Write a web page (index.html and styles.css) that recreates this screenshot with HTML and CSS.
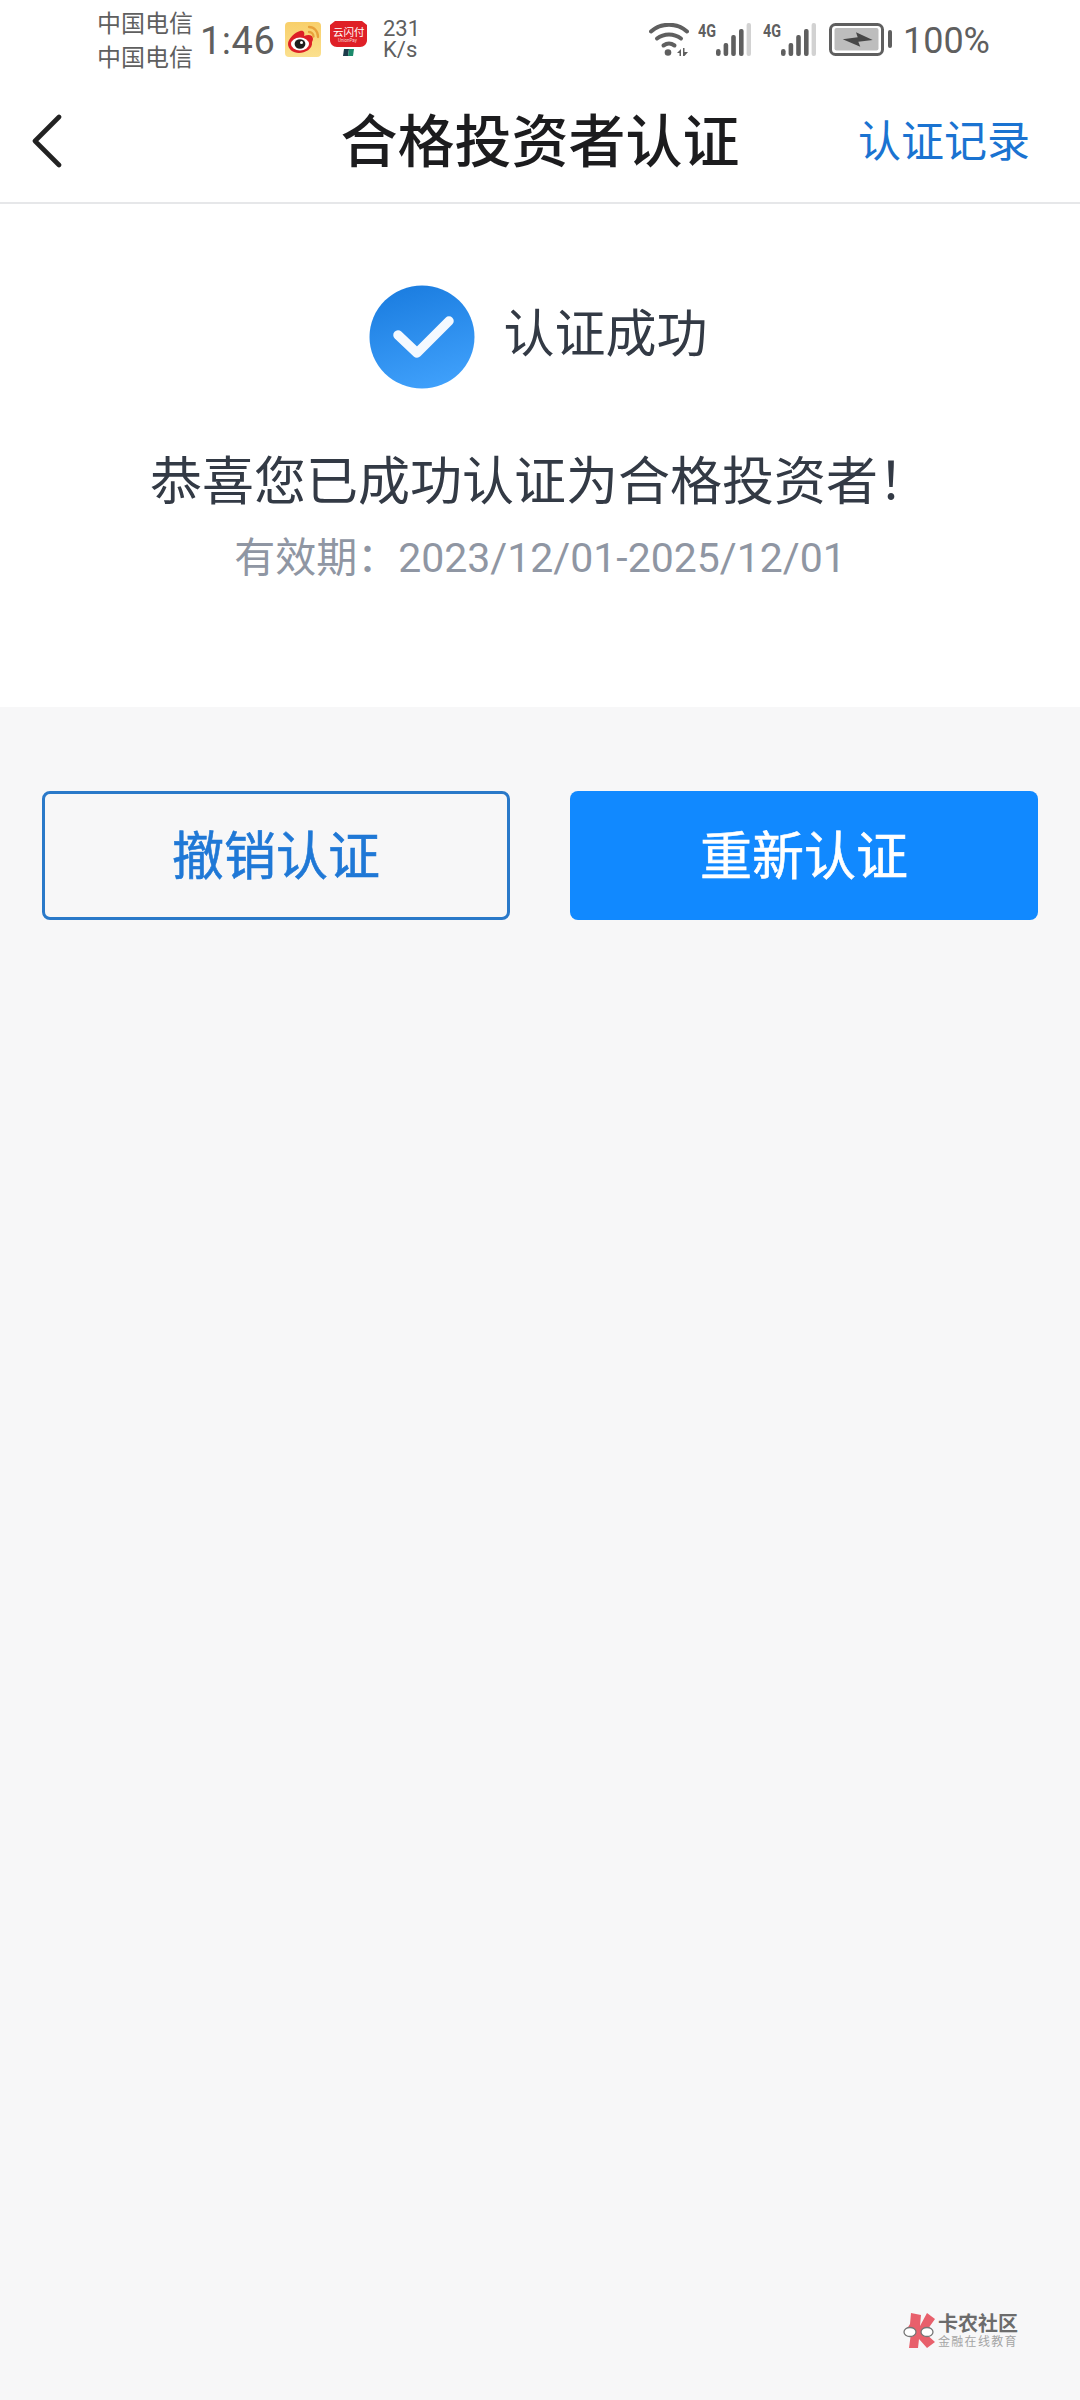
FILE: index.html
```html
<!DOCTYPE html>
<html lang="zh-CN">
<head>
    <meta charset="UTF-8">
    <meta name="viewport" content="width=device-width, initial-scale=1.0">
    <title>合格投资者认证</title>
    <link rel="stylesheet" href="styles.css">
</head>
<body>
<div class="status-bar">
    <div class="status-left">
        <div class="carriers">
            <div>中国电信</div>
            <div>中国电信</div>
        </div>
        <div class="time">1:46</div>
        <svg class="app-icon weibo" width="36" height="35" viewBox="0 0 36 35">
            <defs>
                <linearGradient id="wbGrad" x1="0" y1="0" x2="0" y2="1">
                    <stop offset="0" stop-color="#f8cf6a"/>
                    <stop offset="1" stop-color="#fbe08e"/>
                </linearGradient>
            </defs>
            <rect width="36" height="35" rx="4" fill="url(#wbGrad)"/>
            <path d="M3 22c0-5 7-12 12-13 4-1 5 2 4 5 5-2 9-1 9 3 0 1-.5 2-1 3 1 7-7 11-13 11C8 31 3 27 3 22z" fill="#dd1f26"/>
            <ellipse cx="15" cy="22" rx="9" ry="6.5" fill="#fff"/>
            <ellipse cx="15" cy="22" rx="5.4" ry="4.8" fill="#1e1e1e"/>
            <circle cx="16.5" cy="20.5" r="1.5" fill="#fff"/>
            <path d="M24 5c5 0 9 4 9 10M24 10c2.500 0 4.500 2 4.500 4.500" fill="none" stroke="#e8a13a" stroke-width="2.300" stroke-linecap="round"/>
        </svg>
        <svg class="app-icon" width="37" height="36" viewBox="0 0 37 36">
            <path d="M5 0h27l5 4v15c0 4-3 7-7 7H7c-4 0-7-3-7-7V4z" fill="#df2027"/>
            <text x="3" y="14.500" class="up-name">云闪付</text>
            <text x="8" y="21" class="up-sub">UnionPay</text>
            <path d="M14 28h5l-1 7h-5z" fill="#1c3a4a"/>
            <path d="M19 28h5l-1 7h-5z" fill="#1b8a6b"/>
        </svg>
        <div class="speed">
            <div>231</div>
            <div>K/s</div>
        </div>
    </div>
    <div class="status-right">
        <svg class="wifi" width="40" height="33" viewBox="0 0 40 33">
            <path d="M2 8.500c10-9 26-9 36 0" fill="none" stroke="#5f5f5f" stroke-width="4" stroke-linecap="round"/>
            <path d="M8 15.500c7-5.500 17-5.500 24 0" fill="none" stroke="#5f5f5f" stroke-width="4" stroke-linecap="round"/>
            <path d="M14.500 22.500c3.500-2.500 7.500-2.500 11 0" fill="none" stroke="#5f5f5f" stroke-width="4" stroke-linecap="round"/>
            <circle cx="19" cy="29.500" r="3.300" fill="#5f5f5f"/>
            <path d="M28 30l4-4v7h-1.500v-3zM34 25h1.500v4h3.500l-3.500 4H34z" fill="#5f5f5f"/>
        </svg>
        <svg class="signal" width="54" height="39" viewBox="0 -6 54 39">
            <text x="0" y="14" class="net-label" textLength="18" lengthAdjust="spacingAndGlyphs">4G</text>
            <rect x="18" y="26" width="4.600" height="7" rx="2.300" fill="#5f5f5f"/>
            <rect x="25.600" y="20" width="4.600" height="13" rx="2" fill="#5f5f5f"/>
            <rect x="33.200" y="12" width="4.600" height="21" rx="2" fill="#5f5f5f"/>
            <rect x="41" y="6" width="4.600" height="27" rx="2" fill="#5f5f5f"/>
            <rect x="48.600" y="0" width="4.400" height="33" rx="2" fill="#d2d2d2"/>
        </svg>
        <svg class="signal" width="54" height="39" viewBox="0 -6 54 39">
            <text x="0" y="14" class="net-label" textLength="18" lengthAdjust="spacingAndGlyphs">4G</text>
            <rect x="18" y="26" width="4.600" height="7" rx="2.300" fill="#5f5f5f"/>
            <rect x="25.600" y="20" width="4.600" height="13" rx="2" fill="#5f5f5f"/>
            <rect x="33.200" y="12" width="4.600" height="21" rx="2" fill="#5f5f5f"/>
            <rect x="41" y="6" width="4.600" height="27" rx="2" fill="#5f5f5f"/>
            <rect x="48.600" y="0" width="4.400" height="33" rx="2" fill="#d2d2d2"/>
        </svg>
        <svg class="battery" width="63" height="34" viewBox="0 0 63 34">
            <rect x="1.500" y="2.500" width="52" height="30" rx="5" fill="none" stroke="#5f5f5f" stroke-width="3"/>
            <rect x="5.500" y="6" width="44" height="22.500" rx="2" fill="#bdbdbd"/>
            <path d="M13.700 17.300l15-2-1.700-5 16.700 7.700-14.400 1.700 2 5z" fill="#474747"/>
            <rect x="59" y="8" width="4" height="18" rx="2" fill="#5f5f5f"/>
        </svg>
        <div class="battery-pct">100%</div>
    </div>
</div>

<header class="nav">
    <svg class="back" width="32" height="54" viewBox="0 0 32 54">
        <path d="M29 3L5 27l24 24" fill="none" stroke="#222" stroke-width="4.600" stroke-linecap="round" stroke-linejoin="round"/>
    </svg>
    <h1 class="nav-title">合格投资者认证</h1>
    <a class="nav-link">认证记录</a>
</header>

<section class="result">
    <div class="result-head">
        <svg width="106" height="104" viewBox="0 0 106 104">
            <defs>
                <linearGradient id="okGrad" x1="0.300" y1="0" x2="0.600" y2="1">
                    <stop offset="0" stop-color="#1b7de0"/>
                    <stop offset="1" stop-color="#3fa0fb"/>
                </linearGradient>
            </defs>
            <ellipse cx="53" cy="52" rx="52.500" ry="51.500" fill="url(#okGrad)"/>
            <path d="M29 50l19 18 32-32" fill="none" stroke="#f4f9ff" stroke-width="9.500" stroke-linecap="round" stroke-linejoin="round"/>
        </svg>
        <span class="result-label">认证成功</span>
    </div>
    <p class="result-msg">恭喜您已成功认证为合格投资者！</p>
    <p class="result-date">有效期：2023/12/01-2025/12/01</p>
</section>

<div class="actions">
    <button class="btn btn-outline">撤销认证</button>
    <button class="btn btn-solid">重新认证</button>
</div>

<div class="watermark">
    <svg width="32" height="35" viewBox="0 0 32 35">
        <path d="M8 0l10 2-1 11 7-13 8 6-10 14 10 9-8 6-8-9-1 9H6l2-15-6-1 5-8z" fill="#e8606c"/>
        <ellipse cx="7" cy="19" rx="6" ry="4.500" fill="#fff" stroke="#777" stroke-width="1.300"/>
        <ellipse cx="24" cy="19" rx="6" ry="4.500" fill="#fff" stroke="#777" stroke-width="1.300"/>
    </svg>
    <div class="watermark-text">
        <div class="wm-name">卡农社区</div>
        <div class="wm-sub">金融在线教育</div>
    </div>
</div>
</body>
</html>
```

FILE: styles.css
```css
* {
    box-sizing: border-box;
}
html, body {
    height: 100%;
}
body {
    margin: 0;
    background-color: #f7f7f8;
    font-family: "Roboto", "Noto Sans CJK SC", sans-serif;
    position: relative;
    overflow: hidden;
}
p, h1 {
    margin: 0;
}
.status-bar {
    height: 78px;
    padding: 0 90px 0 97px;
    background-color: #fff;
    color: #5f5f5f;
    display: flex;
    justify-content: space-between;
    align-items: center;
}
.status-left, .status-right {
    display: flex;
    align-items: center;
}
.carriers {
    font-size: 24px;
    line-height: 34px;
    width: 103px;
    margin-top: 4px;
}
.time {
    font-size: 38px;
    width: 85px;
    margin-top: 3px;
    letter-spacing: 0.5px;
}
.app-icon {
    margin-right: 9px;
}
.up-name {
    font-family: "Noto Sans CJK SC", sans-serif;
    font-size: 10.5px;
    fill: #fff;
}
.up-sub {
    font-family: "Roboto", sans-serif;
    font-size: 4.5px;
    fill: #f7d9d6;
}
.speed {
    margin-left: 7px;
    font-size: 22px;
    line-height: 21px;
}
.wifi {
    margin-right: 9px;
}
.signal {
    margin-top: -6px;
    margin-right: 11px;
}
.signal + .battery {
    margin-left: 1px;
    margin-right: 11px;
}
.net-label {
    font-family: "Roboto", sans-serif;
    font-size: 19px;
    font-weight: 700;
    fill: #5f5f5f;
}
.battery-pct {
    font-size: 36px;
    margin-top: 3px;
}
.nav {
    height: 126px;
    padding: 0 50px 0 30px;
    background-color: #fff;
    border-bottom: 2px solid #e6e7e9;
    display: flex;
    align-items: center;
    justify-content: space-between;
    position: relative;
}
.back {
    margin-top: 2px;
}
.nav-title {
    position: absolute;
    left: 0;
    right: 0;
    text-align: center;
    font-size: 57px;
    font-weight: 500;
    color: #1c1c1e;
    padding-bottom: 6px;
    pointer-events: none;
}
.nav-link {
    font-size: 43px;
    color: #1a73d1;
    padding-bottom: 4px;
}
.result {
    height: 503px;
    padding-top: 81px;
    background-color: #fff;
    display: flex;
    flex-direction: column;
    align-items: center;
}
.result-head {
    display: flex;
    align-items: center;
    gap: 28px;
    margin-right: 3px;
}
.result-label {
    font-size: 51px;
    color: #333a45;
    margin-bottom: 14px;
}
.result-msg {
    margin-top: 58px;
    font-size: 52px;
    line-height: 72px;
    color: #333a45;
}
.result-date {
    margin-top: 10px;
    font-size: 41px;
    line-height: 58px;
    color: #8f96a3;
}
.actions {
    padding: 84px 42px 0;
    display: grid;
    grid-template-columns: 468px 468px;
    justify-content: space-between;
}
.btn {
    height: 129px;
    padding: 0 0 6px;
    border-radius: 8px;
    font-family: inherit;
    font-size: 52px;
    -webkit-text-stroke: 0.6px currentColor;
}
.btn-outline {
    background: transparent;
    border: 3px solid #2a79c9;
    color: #1f78d6;
}
.btn-solid {
    background-color: #1189ff;
    border: none;
    color: #fff;
}
.watermark {
    position: absolute;
    left: 903px;
    top: 2313px;
    display: flex;
    align-items: flex-start;
    gap: 3px;
}
.wm-name {
    font-size: 20px;
    line-height: 20px;
    font-weight: 700;
    color: #6c6c6c;
    margin-top: 1px;
}
.wm-sub {
    font-size: 12px;
    line-height: 16px;
    letter-spacing: 1.3px;
    color: #a5a5a5;
}
```
